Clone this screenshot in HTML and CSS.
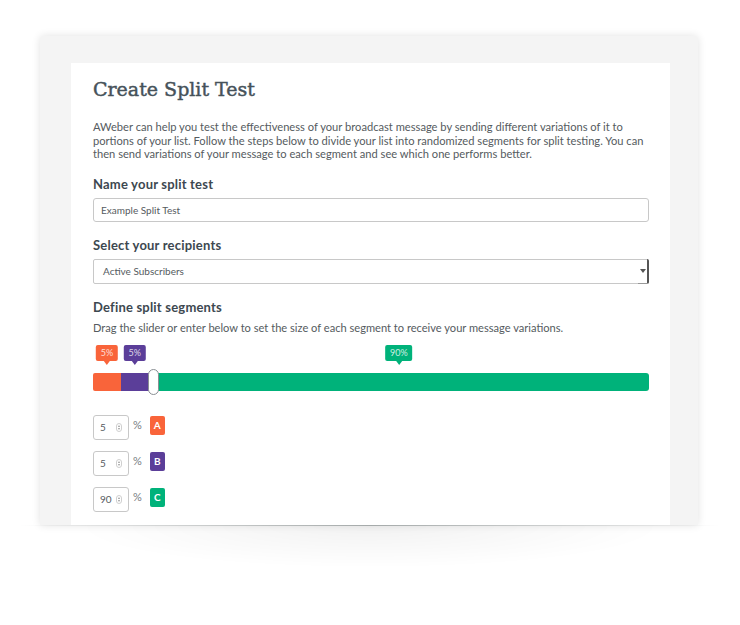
FILE: index.html
```html
<!DOCTYPE html>
<html>
<head>
<meta charset="utf-8">
<link rel="stylesheet" href="styles.css">
</head>
<body>
<div class="panel">
  <div class="card">
    <h1 class="title">Create Split Test</h1>
    <p class="intro">AWeber can help you test the effectiveness of your broadcast message by sending different variations of it to portions of your list. Follow the steps below to divide your list into randomized segments for split testing. You can then send variations of your message to each segment and see which one performs better.</p>

    <label class="label">Name your split test</label>
    <div class="field">Example Split Test</div>

    <label class="label">Select your recipients</label>
    <div class="field select">Active Subscribers<span class="arrow"><svg width="6" height="4" viewBox="0 0 6 4"><path d="M0 0h6L3 4z" fill="#555"/></svg></span></div>

    <label class="label">Define split segments</label>
    <p class="hint">Drag the slider or enter below to set the size of each segment to receive your message variations.</p>

    <div class="slider">
      <div class="bar">
        <div class="seg seg-a" style="width:5%"><span class="tip tip-a">5%</span></div>
        <div class="seg seg-b" style="width:5%"><span class="tip tip-b">5%</span></div>
        <div class="seg seg-c" style="width:90%"><span class="tip tip-c">90%</span></div>
      </div>
      <div class="handle"></div>
    </div>

    <div class="rows">
      <div class="row">
        <div class="num"><span>5</span><span class="spin"></span></div>
        <span class="pct">%</span>
        <span class="badge badge-a">A</span>
      </div>
      <div class="row">
        <div class="num"><span>5</span><span class="spin"></span></div>
        <span class="pct">%</span>
        <span class="badge badge-b">B</span>
      </div>
      <div class="row">
        <div class="num"><span>90</span><span class="spin"></span></div>
        <span class="pct">%</span>
        <span class="badge badge-c">C</span>
      </div>
    </div>
  </div>
</div>
<div class="fade"></div>
</body>
</html>
```
FILE: styles.css
```css
html, body {
  margin: 0;
  padding: 0;
  background: #ffffff;
}
body {
  padding-top: 36px;
  font-family: "Lato", "Liberation Sans", sans-serif;
  color: #555b60;
}
.panel {
  margin-left: 40px;
  width: 599px;
  height: 462px;
  padding: 27px 28px 0 31px;
  background: #f4f4f4;
  box-shadow: 0 0 8px rgba(0, 0, 0, 0.12);
  border-radius: 4px 4px 0 0;
  overflow: hidden;
}
.card {
  background: #ffffff;
  height: 100%;
  padding: 14px 21px 0 22px;
  box-sizing: border-box;
}
.title {
  margin: 0;
  font-family: "DejaVu Serif", serif;
  font-weight: normal;
  font-size: 19px;
  line-height: 24px;
  color: #46525a;
  -webkit-text-stroke: 0.45px #46525a;
}
.intro {
  margin: 19px 0 0;
  font-size: 11.15px;
  line-height: 13.5px;
  color: #555b60;
}
.label {
  display: block;
  margin-top: 15px;
  font-size: 13px;
  font-weight: bold;
  line-height: 16px;
  color: #3d4850;
  letter-spacing: 0.2px;
}
.field {
  margin-top: 6px;
  height: 24px;
  box-sizing: border-box;
  border: 1px solid #c8c8c8;
  border-radius: 3px;
  padding: 0 7px;
  font-size: 10px;
  line-height: 22px;
  color: #555b60;
  position: relative;
}
.select {
  height: 25px;
  padding-left: 9px;
  line-height: 23px;
  border-radius: 2px;
}
.arrow {
  position: absolute;
  right: -1px;
  top: -1px;
  width: 11px;
  height: 25px;
  box-sizing: border-box;
  border-right: 2px solid #555;
  border-bottom: 1px solid #999;
  border-radius: 0 2px 2px 0;
  display: flex;
  align-items: center;
  justify-content: center;
}
.label + .hint {
  margin-top: 6px;
}
.hint {
  margin: 0;
  font-size: 11.1px;
  line-height: 14px;
  color: #555b60;
}
.slider {
  position: relative;
  margin-top: 38px;
}
.bar {
  display: flex;
  height: 18px;
  border-radius: 2px;
  overflow: visible;
}
.seg {
  position: relative;
  height: 100%;
}
.seg-a { background: #f9643a; border-radius: 2px 0 0 2px; }
.seg-b { background: #5b3e99; }
.seg-c { background: #00b27a; border-radius: 0 3px 3px 0; }
.tip {
  position: absolute;
  bottom: calc(100% + 12px);
  left: 50%;
  transform: translateX(-50%);
  height: 16px;
  padding: 0 5px;
  border-radius: 2px;
  font-size: 9px;
  line-height: 16px;
  color: rgba(255, 255, 255, 0.8);
  white-space: nowrap;
}
.tip::after {
  content: "";
  position: absolute;
  left: 50%;
  top: 100%;
  margin-left: -3px;
  border: 3px solid transparent;
  border-top-width: 4px;
}
.tip-a { background: #f9643a; }
.tip-a::after { border-top-color: #f9643a; }
.tip-b { background: #5b3e99; }
.tip-b::after { border-top-color: #5b3e99; }
.tip-c { background: #00b27a; }
.tip-c::after { border-top-color: #00b27a; }
.handle {
  position: absolute;
  top: -4px;
  left: calc(10% - 1px);
  width: 11px;
  height: 26px;
  box-sizing: border-box;
  background: #fff;
  border: 1.5px solid #8a8f94;
  border-radius: 6px;
}
.rows {
  margin-top: 24px;
  display: flex;
  flex-direction: column;
  gap: 11px;
}
.row {
  display: flex;
  align-items: flex-start;
  height: 25px;
}
.num {
  width: 36px;
  height: 25px;
  box-sizing: border-box;
  border: 1px solid #c8c8c8;
  border-radius: 3px;
  display: flex;
  align-items: center;
  justify-content: space-between;
  padding: 0 6px 0 6px;
  font-size: 10px;
  color: #555b60;
}
.spin {
  width: 6px;
  height: 9px;
  box-sizing: border-box;
  border: 1px solid #d0d0d0;
  border-radius: 3px;
  position: relative;
}
.spin::before, .spin::after {
  content: "";
  position: absolute;
  left: 1px;
  border-left: 1px solid transparent;
  border-right: 1px solid transparent;
}
.spin::before { top: 1px; border-bottom: 2px solid #999; }
.spin::after { bottom: 1px; border-top: 2px solid #999; }
.pct {
  margin-left: 4px;
  font-size: 11px;
  line-height: 20px;
  color: #777c80;
}
.badge {
  margin-left: 8px;
  margin-top: 1px;
  width: 15px;
  height: 19px;
  border-radius: 2px;
  color: #fff;
  font-size: 10px;
  font-weight: bold;
  line-height: 19px;
  text-align: center;
}
.badge-a { background: #f9643a; }
.badge-b { background: #5b3e99; }
.badge-c { background: #00b27a; }
.fade {
  margin-left: 20px;
  width: 700px;
  height: 60px;
  background: radial-gradient(ellipse 60% 100% at 50% 0%, rgba(0, 0, 0, 0.05), rgba(0, 0, 0, 0) 70%);
  border-top: 1px solid transparent;
  border-image: linear-gradient(90deg, rgba(0,0,0,0), rgba(90,100,100,0.5) 50%, rgba(0,0,0,0)) 1;
}
```
